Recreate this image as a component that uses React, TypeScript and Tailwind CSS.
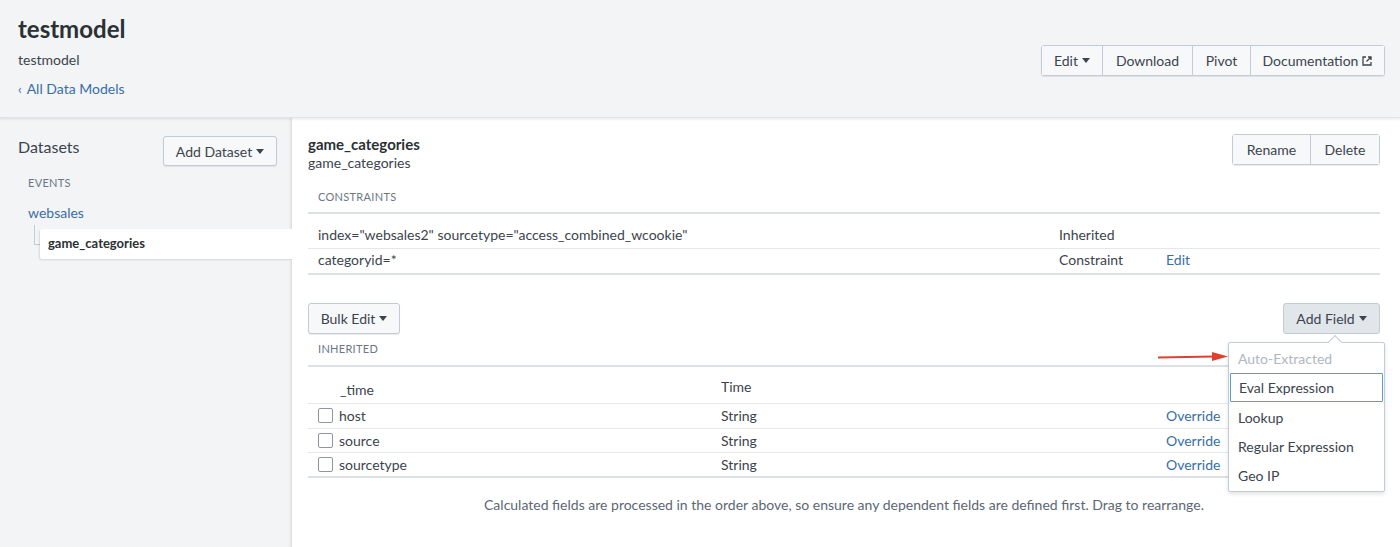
import React from "react";

const Caret = () => (
  <svg width="8" height="5" viewBox="0 0 8 5" className="ml-1 inline-block">
    <path d="M0 0h8L4 5z" fill="currentColor" />
  </svg>
);

const ExtLink = () => (
  <svg width="10" height="10" viewBox="0 0 10 10" className="ml-1 inline-block">
    <path d="M4 1H1v8h8V6" fill="none" stroke="currentColor" strokeWidth="1.3" />
    <path d="M6 1h3v3M9 1L4.5 5.5" fill="none" stroke="currentColor" strokeWidth="1.3" />
  </svg>
);

const btn =
  "flex items-center justify-center h-full text-[14px] text-[#3c444d] bg-[#f7f8fa] border-r border-[#c3cbd4] last:border-r-0 whitespace-nowrap";

const Group = ({ items }: { items: [React.ReactNode, string][] }) => (
  <div className="flex h-[31px] border border-[#c3cbd4] rounded-[3px] shadow-[0_1px_1px_rgba(0,0,0,0.08)] bg-[#f7f8fa]">
    {items.map(([it, w], i) => (
      <div key={i} className={`${btn} ${w}`}>
        {it}
      </div>
    ))}
  </div>
);

const Checkbox = () => (
  <div className="w-[15px] h-[15px] border border-[#8d969e] rounded-[2px] bg-white mr-[6px]" />
);

export default function App() {
  const fields = ["host", "source", "sourcetype"];
  return (
    <div
      className="w-[1400px] h-[547px] overflow-hidden bg-white text-[#3c444d]"
      style={{ fontFamily: "Lato, 'Open Sans', sans-serif" }}
    >
      {/* header */}
      <div className="h-[118px] bg-[#f2f4f5] border-b border-[#dfe3e6] shadow-[0_2px_2px_rgba(0,0,0,0.06)] flex justify-between px-[18px] relative z-10">
        <div className="pt-[13px]">
          <div className="text-[24px] font-bold leading-[32px] text-[#2b3033]">testmodel</div>
          <div className="text-[14px] mt-[5px] leading-[20px]">testmodel</div>
          <div className="text-[14px] mt-[9px] leading-[20px] text-[#3a6ea5] flex items-center">
            <span className="mr-[5px] text-[13px]">&lsaquo;</span>All Data Models
          </div>
        </div>
        <div className="pt-[45px] mr-[-3px]">
          <Group
            items={[
              [<span className="flex items-center">Edit<Caret /></span>, "w-[61px]"],
              ["Download", "w-[90px]"],
              ["Pivot", "w-[58px]"],
              [<span className="flex items-center">Documentation<ExtLink /></span>, "w-[133px]"],
            ]}
          />
        </div>
      </div>

      <div className="flex h-[429px]">
        {/* sidebar */}
        <div className="w-[292px] bg-[#f2f4f5] shadow-[inset_-3px_0_3px_-2px_rgba(0,0,0,0.12)] pt-[18px]">
          <div className="flex justify-between items-start pl-[18px] pr-[15px]">
            <div className="text-[16px] leading-[22px]">Datasets</div>
            <div className="h-[30px] w-[114px] flex items-center justify-center whitespace-nowrap border border-[#c3cbd4] rounded-[3px] bg-[#f7f8fa] shadow-[0_1px_1px_rgba(0,0,0,0.08)] text-[14px]">
              Add Dataset<Caret />
            </div>
          </div>
          <div className="pl-[28px] mt-[9px] text-[11px] tracking-[0.3px] text-[#6b7785]">EVENTS</div>
          <div className="pl-[28px] mt-[10px] text-[14px] text-[#3a6ea5]">websales</div>
          <div className="flex mt-[2px]">
            <div className="w-[40px] pl-[34px] pt-0">
              <div className="w-[6px] h-[20px] border-l border-b border-[#c3cbd4]" />
            </div>
            <div className="flex-1 mt-[4px] h-[30px] bg-white shadow-[-1px_1px_2px_rgba(0,0,0,0.12)] rounded-l-[2px] flex items-center pl-[8px] text-[13px] font-bold text-[#2b3033]">
              game_categories
            </div>
          </div>
        </div>

        {/* main */}
        <div className="flex-1 pl-[16px] pr-[20px] relative">
          <div className="flex justify-between pt-[16px]">
            <div>
              <div className="text-[15px] font-bold leading-[20px] text-[#2b3033]">game_categories</div>
              <div className="text-[14px] leading-[18px]">game_categories</div>
            </div>
            <div className="h-[31px]">
              <Group
                items={[
                  ["Rename", "w-[78px]"],
                  ["Delete", "w-[68px]"],
                ]}
              />
            </div>
          </div>

          <div className="mt-[17px] pl-[10px] text-[11px] tracking-[0.3px] text-[#6b7785] leading-[16px]">CONSTRAINTS</div>
          <div className="mt-[7px] border-t-2 border-[#dde1e5]" />
          <div className="flex items-center h-[35px] pt-[6px] border-b border-[#e5e8eb] text-[14px] pl-[10px]">
            <div className="w-[741px]">index="websales2" sourcetype="access_combined_wcookie"</div>
            <div>Inherited</div>
          </div>
          <div className="flex items-center h-[26px] pb-[3px] border-b-2 border-[#dde1e5] text-[14px] pl-[10px]">
            <div className="w-[741px]">categoryid=*</div>
            <div className="w-[107px]">Constraint</div>
            <div className="text-[#3a6ea5]">Edit</div>
          </div>

          <div className="flex justify-between mt-[28px]">
            <div className="h-[31px] w-[92px] justify-center flex items-center border border-[#c3cbd4] rounded-[3px] bg-[#f7f8fa] shadow-[0_1px_1px_rgba(0,0,0,0.08)] text-[14px]">
              Bulk Edit<Caret />
            </div>
            <div className="h-[31px] w-[97px] justify-center flex items-center border border-[#c3cbd4] rounded-[3px] bg-[#e1e6eb] text-[14px]">
              Add Field<Caret />
            </div>
          </div>
          <div className="mt-[7px] pl-[10px] text-[11px] tracking-[0.3px] text-[#6b7785] leading-[16px]">INHERITED</div>
          <div className="mt-[8px] border-t-2 border-[#dde1e5]" />
          <div className="flex h-[37px] border-b border-[#e5e8eb] text-[14px]">
            <div className="w-[413px] pl-[32px] pt-[12px]">_time</div>
            <div className="pt-[9px]">Time</div>
          </div>
          {fields.map((f, i) => (
            <div
              key={f}
              className={`flex items-center h-[24.5px] text-[14px] ${i === 2 ? "border-b-2 border-[#dde1e5]" : "border-b border-[#e5e8eb]"}`}
            >
              <div className="w-[413px] pl-[10px] flex items-center">
                <Checkbox />
                {f}
              </div>
              <div className="w-[445px]">String</div>
              <div className="text-[#3a6ea5]">Override</div>
            </div>
          ))}

          <div className="text-center text-[14px] text-[#5c6773] mt-[16px]">
            Calculated fields are processed in the order above, so ensure any dependent fields are defined first. Drag to rearrange.
          </div>

          {/* dropdown */}
          <div className="absolute left-[936px] top-[224px] w-[157px] h-[150px] bg-white border border-[#c3cbd4] rounded-[2px] shadow-[0_2px_4px_rgba(0,0,0,0.12)] py-[2px] text-[14px]">
            <div className="absolute -top-[6px] left-[101px] w-[10px] h-[10px] bg-white border-l border-t border-[#c3cbd4] rotate-45" />
            <div className="relative h-[26px] flex items-center pl-[9px] text-[#b0b7bf]">Auto-Extracted</div>
            <div className="h-[29px] mt-[2px] flex items-center pl-[8px] mx-[1px] border border-[#5b9bd5] rounded-[1px]">Eval Expression</div>
            <div className="h-[30px] flex items-center pl-[9px]">Lookup</div>
            <div className="h-[29px] flex items-center pl-[9px]">Regular Expression</div>
            <div className="h-[29px] flex items-center pl-[9px]">Geo IP</div>
          </div>

          {/* red arrow */}
          <svg className="absolute left-[866px] top-[233px]" width="72" height="12" viewBox="0 0 72 12">
            <path d="M0 6.5 L56 5.5" stroke="#e0402e" strokeWidth="2" />
            <path d="M54 1 L70 5.5 L54 10 Z" fill="#e0402e" />
          </svg>
        </div>
      </div>
    </div>
  );
}
